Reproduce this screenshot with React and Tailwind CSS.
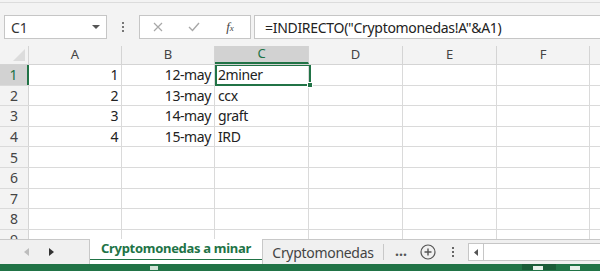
import React from "react";

const cols = [
  { k: "A", w: 93 },
  { k: "B", w: 93 },
  { k: "C", w: 94 },
  { k: "D", w: 94 },
  { k: "E", w: 94 },
  { k: "F", w: 93 },
  { k: "G", w: 94 },
];

const data = [
  ["1", "12-may", "2miner"],
  ["2", "13-may", "ccx"],
  ["3", "14-may", "graft"],
  ["4", "15-may", "IRD"],
];

const font = { fontFamily: '"Noto Sans", "Open Sans", sans-serif' };

export default function App() {
  return (
    <div className="w-[600px] h-[271px] overflow-hidden bg-[#f3f3f3] flex flex-col text-[#222]" style={font}>
      {/* Formula bar */}
      <div className="h-[47px] flex items-start pt-[12px] border-t border-[#dcdcdc] mt-[2px] -mb-[3px]">
        <div className="ml-[4px] w-[103px] h-[24px] bg-white border border-[#c6c6c6] flex items-center justify-between pl-[6px] pr-[6px]">
          <span className="text-[14px] text-[#333]">C1</span>
          <svg width="8" height="5" viewBox="0 0 8 5"><path d="M0 0 L8 0 L4 4 Z" fill="#555" /></svg>
        </div>
        <div className="w-[32px] h-[24px] flex flex-col items-center justify-center gap-[2px]">
          <span className="w-[2px] h-[2px] bg-[#777]" />
          <span className="w-[2px] h-[2px] bg-[#777]" />
          <span className="w-[2px] h-[2px] bg-[#777]" />
        </div>
        <div className="w-[112px] h-[24px] bg-white border border-[#c6c6c6] flex items-center">
          <div className="w-[36px] flex justify-center">
            <svg width="10" height="10" viewBox="0 0 10 10"><path d="M1 1 L9 9 M9 1 L1 9" stroke="#a8a8a8" strokeWidth="1.2" /></svg>
          </div>
          <div className="w-[36px] flex justify-center">
            <svg width="12" height="10" viewBox="0 0 12 10"><path d="M1 5 L4.5 8.5 L11 1" stroke="#a8a8a8" strokeWidth="1.4" fill="none" /></svg>
          </div>
          <div className="w-[36px] flex justify-center">
            <span className="text-[13px] italic text-[#444]" style={{ fontFamily: '"Liberation Serif", serif' }}>
              f<span className="text-[9px]">x</span>
            </span>
          </div>
        </div>
        <div className="ml-[3px] flex-1 h-[24px] bg-white border border-[#c6c6c6] border-r-0 flex items-center pl-[10px]">
          <span className="text-[14px] tracking-[-0.3px] text-[#222] whitespace-nowrap">=INDIRECTO("Cryptomonedas!A"&amp;A1)</span>
        </div>
      </div>

      {/* Column headers */}
      <div className="h-[19px] flex bg-[#f3f3f3] border-b border-[#d4d4d4]">
        <div className="w-[29px] shrink-0 relative border-r border-[#d4d4d4]">
          <svg className="absolute right-[3px] bottom-[3px]" width="12" height="12" viewBox="0 0 12 12"><path d="M12 0 L12 12 L0 12 Z" fill="#dcdcdc" /></svg>
        </div>
        {cols.map((c) => (
          <div
            key={c.k}
            style={{ width: c.w }}
            className={
              "shrink-0 flex items-center justify-center text-[13px] border-r border-[#d4d4d4] " +
              (c.k === "C" ? "bg-[#d2d2d2] text-[#217346] border-b-2 border-b-[#217346]" : "text-[#444]")
            }
          >
            {c.k}
          </div>
        ))}
      </div>

      {/* Grid */}
      <div className="h-[174px] overflow-hidden bg-white relative">
        {Array.from({ length: 9 }).map((_, r) => {
          const row = data[r];
          const sel = r === 0;
          return (
            <div key={r} className="h-[20.6px] flex border-b border-[#dadada]">
              <div
                className={
                  "w-[29px] shrink-0 flex items-center justify-center text-[14px] " +
                  (sel ? "bg-[#d2d2d2] text-[#217346] border-r-2 border-[#217346]" : "bg-[#f3f3f3] text-[#444] border-r border-[#d4d4d4]")
                }
              >
                {r + 1}
              </div>
              {cols.map((c, ci) => (
                <div
                  key={c.k}
                  style={{ width: c.w }}
                  className={
                    "shrink-0 flex items-center text-[14px] tracking-[-0.4px] text-[#222] border-r border-[#dadada] whitespace-nowrap overflow-hidden " +
                    (ci < 2 ? "justify-end pr-[3px]" : "pl-[3px]")
                  }
                >
                  {row && ci < 3 ? row[ci] : ""}
                </div>
              ))}
            </div>
          );
        })}
        {/* selection box */}
        <div className="absolute left-[215px] top-[-1px] w-[96px] h-[22px] border-2 border-[#217346]">
          <div className="absolute right-[-4px] bottom-[-4px] w-[6px] h-[6px] bg-[#217346] border border-white" />
        </div>
      </div>

      {/* Tab bar */}
      <div className="h-[25px] flex items-stretch bg-[#f0f0f0] border-t border-[#c8c8c8]">
        <div className="w-[89px] shrink-0 flex items-center">
          <svg className="ml-[24px]" width="5" height="8" viewBox="0 0 5 8"><path d="M5 0 L5 8 L0 4 Z" fill="#bdbdbd" /></svg>
          <svg className="ml-[20px]" width="5" height="8" viewBox="0 0 5 8"><path d="M0 0 L0 8 L5 4 Z" fill="#333" /></svg>
        </div>
        <div className="w-[174px] shrink-0 bg-white -mt-[1px] border-l border-r border-[#c8c8c8] flex flex-col">
          <div className="flex-1 flex items-center justify-center">
            <span className="text-[13px] tracking-[-0.3px] font-bold text-[#217346] whitespace-nowrap">Cryptomonedas a minar</span>
          </div>
          <div className="h-[2px] mb-[4px] bg-[#217346]" />
        </div>
        <div className="w-[121px] shrink-0 flex items-center justify-center border-r border-[#c8c8c8] my-[4px]">
          <span className="text-[14px] tracking-[-0.3px] text-[#444] whitespace-nowrap">Cryptomonedas</span>
        </div>
        <div className="w-[34px] shrink-0 flex items-center justify-center text-[14px] text-[#555] font-bold pb-[4px]">...</div>
        <div className="w-[20px] shrink-0 flex items-center justify-center">
          <svg width="16" height="16" viewBox="0 0 16 16">
            <circle cx="8" cy="8" r="7" fill="none" stroke="#555" strokeWidth="1.2" />
            <path d="M8 4.5 V11.5 M4.5 8 H11.5" stroke="#555" strokeWidth="1.4" />
          </svg>
        </div>
        <div className="w-[30px] shrink-0 flex flex-col items-center justify-center gap-[2px]">
          <span className="w-[2px] h-[2px] bg-[#666]" />
          <span className="w-[2px] h-[2px] bg-[#666]" />
          <span className="w-[2px] h-[2px] bg-[#666]" />
        </div>
        <div className="flex-1 flex items-center">
          <div className="w-full h-[18px] flex bg-white border border-[#c6c6c6] border-r-0">
            <div className="w-[15px] flex items-center justify-center border-r border-[#c6c6c6]">
              <svg width="4" height="7" viewBox="0 0 4 7"><path d="M4 0 L4 7 L0 3.5 Z" fill="#555" /></svg>
            </div>
          </div>
        </div>
      </div>

      {/* Status bar */}
      <div className="flex-1 bg-[#217346] relative">
        <div className="absolute left-[150px] top-[2px] w-[8px] h-[4px] bg-[#cfe3d6]" />
        <div className="absolute left-[522px] top-0 w-[34px] h-[6px] bg-[#1a5c38]" />
        <div className="absolute left-[533px] top-[2px] w-[10px] h-[4px] bg-[#e6efe9]" />
        <div className="absolute left-[570px] top-[2px] w-[10px] h-[4px] bg-[#e6efe9]" />
      </div>
    </div>
  );
}
